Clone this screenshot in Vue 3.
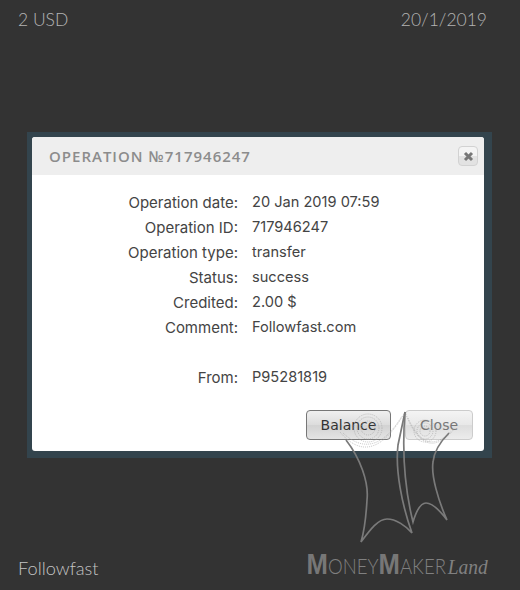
<template>
  <div class="page">
    <header class="top">
      <span>2 USD</span>
      <span>20/1/2019</span>
    </header>

    <div class="frame">
      <div class="dialog">
        <div class="dialog__title">
          <span>OPERATION №717946247</span>
          <button class="dialog__x" type="button">
            <svg width="11" height="11" viewBox="0 0 11 11">
              <path d="M2 2 L9 9 M9 2 L2 9" stroke="#777" stroke-width="3" fill="none" />
            </svg>
          </button>
        </div>
        <div class="dialog__body">
          <div v-for="row in rows" :key="row.label" class="row" :class="{ 'row--gap': row.gap }">
            <span class="row__label">{{ row.label }}</span>
            <span class="row__value">{{ row.value }}</span>
          </div>
        </div>
        <div class="dialog__actions">
          <button class="btn btn--active" type="button">Balance</button>
          <button class="btn btn--off" type="button">Close</button>
        </div>
      </div>
    </div>

    <footer class="bottom">
      <span class="bottom__name">Followfast</span>
      <span class="brand"><b>M</b>ONEY<b>M</b>AKER<i>Land</i></span>
    </footer>

    <!-- watermark -->
    <svg class="mark" width="520" height="590" viewBox="0 0 520 590" fill="none">
      <g stroke="#a0a0a0" stroke-width="0.6" stroke-dasharray="1 1">
        <circle cx="368" cy="428" r="14" />
        <circle cx="368" cy="428" r="11" />
        <circle cx="368" cy="428" r="7" />
        <circle cx="425" cy="431" r="11" />
        <circle cx="425" cy="431" r="8" />
        <circle cx="425" cy="431" r="5" />
        <path d="M340 432 Q372 470 405 412" />
        <path d="M343 433 Q374 462 402 416" />
        <path d="M405 412 Q425 465 455 428" />
        <path d="M408 418 Q426 458 451 431" />
      </g>
      <g stroke="#7a7a7a" stroke-width="1.7">
        <path d="M346 440 C360 458 369 482 367 500 C366 518 364 532 361 542 C370 530 378 519 387 519 C396 519 406 526 412 533 C402 505 395 470 398 445 L405 412" />
        <path d="M405 412 C402 450 405 490 413 522 C416 512 420 503 426 503 C433 503 441 512 447 520 C438 500 431 475 433 462 C434 452 440 442 449 433" />
      </g>
    </svg>
  </div>
</template>

<script setup>
const rows = [
  { label: 'Operation date:', value: '20 Jan 2019 07:59' },
  { label: 'Operation ID:', value: '717946247' },
  { label: 'Operation type:', value: 'transfer' },
  { label: 'Status:', value: 'success' },
  { label: 'Credited:', value: '2.00 $' },
  { label: 'Comment:', value: 'Followfast.com' },
  { label: 'From:', value: 'P95281819', gap: true }
]
</script>

<style>
body {
  margin: 0;
  background: #333333;
}
</style>

<style scoped>
.page {
  position: relative;
  width: 520px;
  height: 590px;
  overflow: hidden;
  background: #333333;
  font-family: Inter, "Liberation Sans", sans-serif;
}

.top {
  display: flex;
  justify-content: space-between;
  height: 122px;
  padding: 10px 33px 0 18px;
  font-family: Lato, sans-serif;
  font-weight: 300;
  font-size: 17.5px;
  line-height: 20px;
  color: #b4b4b4;
}

.frame {
  width: 465px;
  height: 326px;
  margin-left: 27px;
  padding: 5px 8px 7px 5px;
  box-sizing: border-box;
  background: #33444d;
}

.dialog {
  height: 314px;
  background: #fff;
  border-radius: 3px;
  color: #444;
  font-size: 15px;
}

.dialog__title {
  display: flex;
  align-items: center;
  justify-content: space-between;
  height: 38px;
  padding: 0 6px 0 17px;
  background: #eeeeee;
  border-radius: 3px 3px 0 0;
  font-family: "Open Sans", sans-serif;
  font-size: 15px;
  font-weight: 600;
  letter-spacing: 1px;
  color: #8c8c8c;
}

.dialog__x {
  display: flex;
  align-items: center;
  justify-content: center;
  width: 20px;
  height: 20px;
  padding: 0;
  background: linear-gradient(#f4f4f4 50%, #e2e2e2 50%);
  border: 1px solid #d2d2d2;
  border-radius: 4px;
}

.dialog__body {
  padding: 15px 0 0;
  height: 219px;
  box-sizing: border-box;
}

.row {
  display: grid;
  grid-template-columns: 206px 1fr;
  column-gap: 14px;
  height: 25px;
  line-height: 25px;
}

.row--gap {
  margin-top: 25px;
}

.row__label {
  text-align: right;
}

.row__value {
  font-size: 14.6px;
}

.dialog__actions {
  display: flex;
  justify-content: flex-end;
  gap: 14px;
  padding: 16px 11px 0 0;
}

.btn {
  height: 30px;
  padding: 0;
  border-radius: 4px;
  font-family: "DejaVu Sans", sans-serif;
  font-size: 14px;
}

.btn--active {
  width: 85px;
  color: #333;
  background: linear-gradient(#f0f0f0, #dcdcdc 50%, #d2d2d2 52%, #e4e4e4);
  border: 1px solid #777;
}

.btn--off {
  width: 68px;
  color: #777;
  background: linear-gradient(#f4f4f4, #e8e8e8 50%, #dddddd 52%, #ececec);
  border: 1px solid #ccc;
}

.bottom {
  display: flex;
  justify-content: space-between;
  align-items: flex-end;
  height: 132px;
  padding: 0 32px 10px 18px;
  box-sizing: border-box;
}

.bottom__name {
  font-family: Lato, sans-serif;
  font-weight: 300;
  font-size: 18.2px;
  line-height: 24px;
  color: #c4c4c4;
}

.brand {
  display: inline-block;
  transform: scaleX(0.885);
  transform-origin: right center;
  white-space: nowrap;
  font-family: Lato, sans-serif;
  font-weight: 300;
  font-size: 21px;
  line-height: 26px;
  color: #808080;
}

.brand b {
  font-size: 29px;
  font-weight: 700;
  font-family: "Liberation Sans", sans-serif;
  color: #777;
}

.brand i {
  font-family: "Liberation Serif", serif;
  font-size: 22px;
  margin-left: 2px;
}

.mark {
  position: absolute;
  left: 0;
  top: 0;
  pointer-events: none;
}
</style>
